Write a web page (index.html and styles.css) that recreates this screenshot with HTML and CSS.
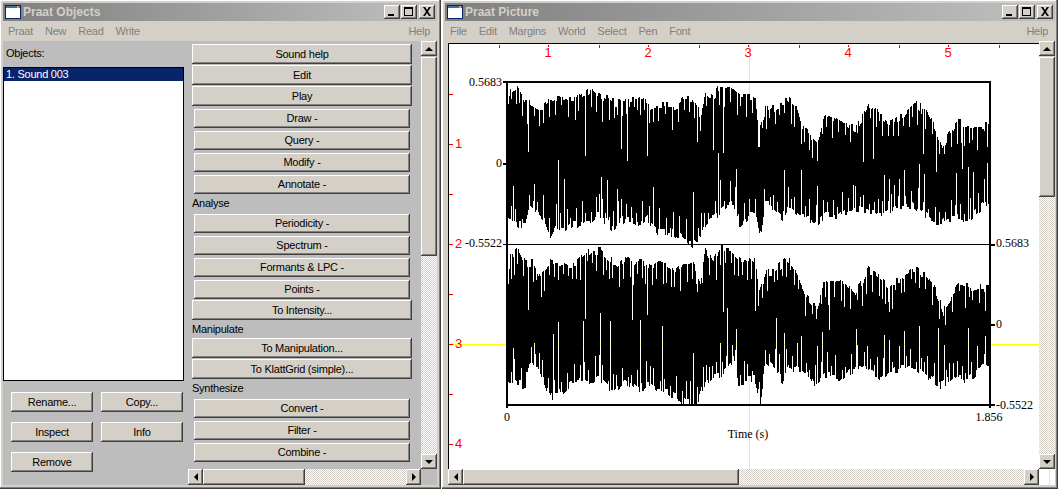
FILE: index.html
```html
<!DOCTYPE html>
<html lang="en">
<head>
<meta charset="utf-8">
<title>Praat</title>
<link rel="stylesheet" href="styles.css">
</head>
<body>
<section class="window window-objects">
  <header class="titlebar">
    <svg class="title-icon" width="16" height="14" viewBox="0 0 16 14"><rect x="0.5" y="0.5" width="15" height="13" fill="#fff" stroke="#0a246a"/><rect x="1" y="1" width="14" height="2" fill="#3a6ea5"/><rect x="12" y="1" width="2" height="2" fill="#f0a030"/></svg>
    <h1 class="title">Praat Objects</h1>
    <div class="controls">
      <button class="ctl"><svg width="12" height="10" viewBox="0 0 12 10"><rect x="2" y="7" width="6" height="2"/></svg></button>
      <button class="ctl"><svg width="12" height="10" viewBox="0 0 12 10"><path d="M1 0h9v9H1zM2 2v6h7V2z" fill-rule="evenodd"/></svg></button>
      <button class="ctl ctl-close"><svg width="12" height="10" viewBox="0 0 12 10"><path d="M2 0h2l2 3 2-3h2L7 4.500 10 9H8L6 6 4 9H2L5 4.500z"/></svg></button>
    </div>
  </header>
  <nav class="menubar">
    <span>Praat</span><span>New</span><span>Read</span><span>Write</span><span class="help">Help</span>
  </nav>
  <div class="objects-main">
    <div class="objects-left">
      <div class="objects-label">Objects:</div>
      <ul class="listbox"><li class="selected">1. Sound 003</li></ul>
      <div class="fixed-actions">
        <button class="btn">Rename...</button>
        <button class="btn">Copy...</button>
        <button class="btn">Inspect</button>
        <button class="btn">Info</button>
        <button class="btn">Remove</button>
      </div>
    </div>
    <div class="objects-right">
      <div class="pane">
        <div class="group group-wide">
          <button class="btn">Sound help</button>
          <button class="btn">Edit</button>
          <button class="btn">Play</button>
        </div>
        <div class="group group-narrow group-first">
          <button class="btn">Draw -</button>
          <button class="btn">Query -</button>
          <button class="btn">Modify -</button>
          <button class="btn">Annotate -</button>
        </div>
        <div class="section-label">Analyse</div>
        <div class="group group-narrow">
          <button class="btn">Periodicity -</button>
          <button class="btn">Spectrum -</button>
          <button class="btn">Formants &amp; LPC -</button>
          <button class="btn">Points -</button>
        </div>
        <div class="group group-wide group-after">
          <button class="btn">To Intensity...</button>
        </div>
        <div class="section-label section-short">Manipulate</div>
        <div class="group group-wide">
          <button class="btn">To Manipulation...</button>
          <button class="btn">To KlattGrid (simple)...</button>
        </div>
        <div class="section-label">Synthesize</div>
        <div class="group group-narrow">
          <button class="btn">Convert -</button>
          <button class="btn">Filter -</button>
          <button class="btn">Combine -</button>
        </div>
      </div>
      <div class="vscroll vscroll-objects">
        <span class="sb-btn"><i class="arrow up"></i></span>
        <span class="sb-thumb thumb-objects"></span>
        <span class="sb-track"></span>
        <span class="sb-btn"><i class="arrow down"></i></span>
      </div>
      <div class="hscroll">
        <span class="sb-btn"><i class="arrow left"></i></span>
        <span class="sb-thumb thumb-h-objects"></span>
        <span class="sb-track"></span>
        <span class="sb-btn"><i class="arrow right"></i></span>
      </div>
    </div>
  </div>
</section>

<section class="window window-picture">
  <header class="titlebar">
    <svg class="title-icon" width="16" height="14" viewBox="0 0 16 14"><rect x="0.5" y="0.5" width="15" height="13" fill="#fff" stroke="#0a246a"/><rect x="1" y="1" width="14" height="2" fill="#3a6ea5"/><rect x="12" y="1" width="2" height="2" fill="#f0a030"/></svg>
    <h1 class="title">Praat Picture</h1>
    <div class="controls">
      <button class="ctl"><svg width="12" height="10" viewBox="0 0 12 10"><rect x="2" y="7" width="6" height="2"/></svg></button>
      <button class="ctl"><svg width="12" height="10" viewBox="0 0 12 10"><path d="M1 0h9v9H1zM2 2v6h7V2z" fill-rule="evenodd"/></svg></button>
      <button class="ctl ctl-close"><svg width="12" height="10" viewBox="0 0 12 10"><path d="M2 0h2l2 3 2-3h2L7 4.500 10 9H8L6 6 4 9H2L5 4.500z"/></svg></button>
    </div>
  </header>
  <nav class="menubar">
    <span>File</span><span>Edit</span><span>Margins</span><span>World</span><span>Select</span><span>Pen</span><span>Font</span><span class="help">Help</span>
  </nav>
  <div class="picture-main">
    <svg class="canvas" width="591" height="426" viewBox="448 43 591 426">
      <rect class="paper" x="448" y="43" width="591" height="426"/>
      <g class="crisp">
        <path class="frame-thin" d="M448 43.500H1039M448.500 43V469"/>
        <path class="selection" d="M449 344.500H1039M749.500 44V469"/>
        <path class="ruler-line" d="M499.500 45V48M548.500 45V47M599.500 45V48M648.500 45V47M699.500 45V48M748.500 45V47M799.500 45V48M848.500 45V47M899.500 45V48M948.500 45V47M999.500 45V48"/>
        <path class="ruler-line" d="M449 94.500H453M449 144.500H453M449 194.500H453M449 244.500H453M449 294.500H453M449 344.500H453M449 394.500H453M449 444.500H453"/>
        <path id="wave" class="wave"/>
        <path class="frame" d="M503 82H991M507 81V408M990 81V408M506 405H995M990 244.500H995M990 324.500H995M503 163.500H507"/>
        <path class="frame-thin" d="M503 244.500H990"/>
      </g>
      <text class="ruler-text" x="548" y="57" text-anchor="middle">1</text>
      <text class="ruler-text" x="648" y="57" text-anchor="middle">2</text>
      <text class="ruler-text" x="748" y="57" text-anchor="middle">3</text>
      <text class="ruler-text" x="848" y="57" text-anchor="middle">4</text>
      <text class="ruler-text" x="948" y="57" text-anchor="middle">5</text>
      <text class="ruler-text" x="455" y="148">1</text>
      <text class="ruler-text" x="455" y="248">2</text>
      <text class="ruler-text" x="455" y="348">3</text>
      <text class="ruler-text" x="455" y="448">4</text>
      <text class="plot-text" x="502" y="86" text-anchor="end">0.5683</text>
      <text class="plot-text" x="502" y="167" text-anchor="end">0</text>
      <text class="plot-text" x="502" y="247" text-anchor="end">-0.5522</text>
      <text class="plot-text" x="996" y="247">0.5683</text>
      <text class="plot-text" x="996" y="328">0</text>
      <text class="plot-text" x="996" y="409">-0.5522</text>
      <text class="plot-text" x="507" y="421" text-anchor="middle">0</text>
      <text class="plot-text" x="989" y="421" text-anchor="middle">1.856</text>
      <text class="plot-text" x="748" y="438" text-anchor="middle">Time (s)</text>
    </svg>
    <div class="vscroll">
      <span class="sb-btn"><i class="arrow up"></i></span>
      <span class="sb-thumb thumb-picture"></span>
      <span class="sb-track"></span>
      <span class="sb-btn"><i class="arrow down"></i></span>
    </div>
    <div class="hscroll hscroll-picture">
      <span class="sb-btn"><i class="arrow left"></i></span>
      <span class="sb-thumb thumb-h-picture"></span>
      <span class="sb-track"></span>
      <span class="sb-btn"><i class="arrow right"></i></span>
    </div>
    <div class="corner"><i class="corner-line"></i></div>
  </div>
</section>
<script src="wave.js"></script>
</body>
</html>
```
FILE: styles.css
```css
* { box-sizing: border-box; }
html, body { margin: 0; padding: 0; }
body {
  width: 1060px;
  height: 489px;
  overflow: hidden;
  display: flex;
  background: #fff;
  font: 11px "Liberation Sans", Arial, sans-serif;
  letter-spacing: -0.25px;
  color: #000;
}
button { font: inherit; letter-spacing: inherit; color: inherit; padding: 0; margin: 0; }

.window {
  height: 489px;
  display: flex;
  flex-direction: column;
  background: #d4d0c8;
  box-shadow: inset -1px -1px #404040, inset -2px -2px #808080, inset 1px 1px #fff;
}
.window-objects { width: 441px; padding: 3px 4px 4px 3px; }
.window-picture { width: 616px; margin-left: 1px; padding: 3px 3px 4px 3px; }

.titlebar {
  height: 18px;
  flex: none;
  display: flex;
  align-items: center;
  padding: 0 2px;
  background: linear-gradient(90deg, #808080, #c0c0c0);
}
.title-icon { flex: none; margin-right: 2px; }
.title {
  margin: 0;
  font-size: 12px;
  font-weight: bold;
  letter-spacing: 0;
  color: #d4d0c8;
}
.controls { margin-left: auto; display: flex; gap: 1px; }
.ctl {
  width: 16px;
  height: 14px;
  display: flex;
  align-items: center;
  justify-content: center;
  border: 0;
  background: #d4d0c8;
  box-shadow: inset -1px -1px #404040, inset 1px 1px #fff, inset -2px -2px #808080;
}
.ctl-close { margin-left: 1px; }
.ctl svg { display: block; }

.menubar {
  height: 20px;
  flex: none;
  display: flex;
  align-items: center;
  gap: 12px;
  padding: 0 7px 0 5px;
  color: #808080;
}
.help { margin-left: auto; }

/* Objects window */
.objects-main {
  flex: 1;
  min-height: 0;
  display: flex;
  background: #bdbdbd;
}
.objects-left { width: 185px; flex: none; display: flex; flex-direction: column; }
.objects-label { height: 26px; padding: 6px 0 0 3px; line-height: 13px; }
.listbox {
  width: 181px;
  height: 314px;
  margin: 0;
  padding: 0;
  list-style: none;
  background: #fff;
  border: 1px solid #000;
}
.selected {
  height: 13px;
  line-height: 13px;
  padding-left: 2px;
  background: #0a246a;
  color: #fff;
}
.fixed-actions {
  display: grid;
  grid-template-columns: 82px 82px;
  grid-auto-rows: 20px;
  gap: 10px 8px;
  margin: 11px 0 0 8px;
}
.btn {
  display: block;
  width: 100%;
  border: 0;
  background: #d4d0c8;
  box-shadow: inset -1px -1px #404040, inset 1px 1px #fff, inset -2px -2px #808080;
  text-align: center;
}

.objects-right {
  flex: 1;
  display: grid;
  grid-template-columns: 233px 16px;
  grid-template-rows: 428px 16px;
}
.pane { padding: 3px 0 0 4px; overflow: hidden; width: 233px; }
.group { display: flex; flex-direction: column; }
.group-wide { width: 220px; gap: 1px; }
.group-wide .btn { height: 20px; }
.group-narrow { width: 216px; margin-left: 2px; gap: 3px; }
.group-narrow .btn { height: 19px; padding-bottom: 2px; }
.group-first { margin-top: 3px; }
.group-after { margin-top: 1px; }
.section-label { height: 20px; line-height: 18px; padding-top: 0; }
.section-short { height: 18px; line-height: 18px; }

/* Scrollbars */
.vscroll { display: flex; flex-direction: column; height: 428px; width: 16px; }
.hscroll { display: flex; height: 16px; width: 233px; grid-column: 1; }
.sb-btn {
  flex: none;
  display: flex;
  align-items: center;
  justify-content: center;
  width: 16px;
  height: 15px;
  background: #d4d0c8;
  box-shadow: inset -1px -1px #404040, inset 1px 1px #fff, inset -2px -2px #808080;
}
.hscroll .sb-btn { width: 15px; height: 16px; }
.sb-thumb {
  flex: none;
  background: #d4d0c8;
  box-shadow: inset -1px -1px #404040, inset 1px 1px #fff, inset -2px -2px #808080;
}
.sb-track {
  flex: 1;
  background: repeating-conic-gradient(#fff 0 25%, #d4d0c8 0 50%) 0 0 / 2px 2px;
}
.thumb-objects { height: 199px; margin-top: 1px; }
.thumb-picture { height: 140px; margin-top: 1px; }
.thumb-h-objects { width: 102px; }
.thumb-h-picture { width: 276px; }
.arrow { display: block; width: 0; height: 0; border: 0 solid transparent; }
.arrow.up { border-width: 0 4px 4px; border-bottom-color: #000; }
.arrow.down { border-width: 4px 4px 0; border-top-color: #000; }
.arrow.left { border-width: 4px 4px 4px 0; border-right-color: #000; }
.arrow.right { border-width: 4px 0 4px 4px; border-left-color: #000; }

/* Picture window */
.picture-main {
  flex: 1;
  min-height: 0;
  display: grid;
  grid-template-columns: 3px 591px 16px;
  grid-template-rows: 2px 426px 16px;
}
.canvas { grid-column: 2; grid-row: 2; display: block; }
.picture-main .vscroll { grid-column: 3; grid-row: 1 / span 2; }
.hscroll-picture { grid-column: 2; grid-row: 3; width: 591px; }
.corner { grid-column: 3; grid-row: 3; background: #fff; padding-left: 10px; }
.corner-line { display: block; width: 1px; height: 100%; background: #ffff00; }

.paper { fill: #fff; }
.crisp { shape-rendering: crispEdges; fill: none; }
.selection { stroke: #ffff00; stroke-width: 1; }
.ruler-line { stroke: #ff0000; stroke-width: 1; }
.wave { stroke: #000; stroke-width: 1; }
.frame { stroke: #000; stroke-width: 2; }
.frame-thin { stroke: #000; stroke-width: 1; }
.ruler-text { font: 13px "Liberation Sans", Arial, sans-serif; letter-spacing: 0; fill: #ff0000; }
.plot-text { font: 12px "Liberation Serif", "Times New Roman", serif; letter-spacing: 0; fill: #000; }
```
FILE: wave.js
```js
(function () {
  // Envelope samples of the recording: [x, y] pairs in canvas coordinates.
  var ch1Top = [[508,110],[510,95],[517,88],[525,102],[533,105],[542,110],[550,105],[558,102],[567,103],[575,103],[583,98],[592,92],[600,97],[608,102],[617,107],[625,102],[633,103],[642,102],[650,108],[658,108],[667,108],[675,110],[683,102],[692,102],[700,117],[705,95],[713,100],[720,88],[730,88],[740,98],[749,98],[755,100],[758,133],[765,113],[775,110],[787,103],[795,108],[800,127],[808,137],[817,148],[823,123],[832,120],[845,127],[855,132],[868,110],[882,118],[888,127],[902,118],[915,108],[925,112],[935,132],[942,148],[948,138],[958,125],[978,128],[989,128]];
  var ch1Bot = [[508,217],[517,222],[525,223],[530,203],[537,208],[543,215],[550,235],[555,225],[563,225],[575,222],[587,218],[600,213],[613,227],[625,215],[637,222],[647,215],[657,228],[667,228],[680,235],[697,243],[703,222],[713,215],[720,208],[733,200],[738,222],[749,212],[755,212],[760,240],[765,202],[773,205],[782,215],[788,203],[798,212],[808,215],[813,223],[825,213],[838,213],[852,205],[865,207],[882,213],[895,203],[912,202],[928,215],[942,220],[952,215],[967,217],[978,207],[989,198]];
  var ch2Top = [[508,290],[510,260],[517,252],[525,267],[533,265],[540,278],[550,263],[558,263],[567,268],[575,268],[583,260],[592,253],[600,253],[608,263],[617,265],[625,260],[633,265],[642,263],[650,272],[658,267],[667,267],[675,273],[683,265],[692,263],[700,283],[705,253],[713,265],[720,252],[730,252],[740,262],[749,262],[755,265],[758,297],[765,277],[775,273],[787,262],[795,273],[800,288],[808,300],[817,308],[823,288],[832,282],[845,283],[855,295],[868,273],[882,283],[888,288],[902,280],[915,272],[925,277],[935,293],[942,312],[948,303],[958,287],[978,290],[989,290]];
  var ch2Bot = [[508,378],[517,382],[525,382],[530,362],[537,363],[543,377],[550,397],[555,387],[563,387],[575,380],[587,378],[600,375],[613,388],[625,377],[637,387],[647,383],[657,387],[667,390],[680,397],[697,402],[703,383],[713,373],[720,372],[733,357],[738,380],[749,377],[755,377],[760,400],[765,360],[773,367],[782,377],[788,363],[798,368],[808,372],[813,383],[825,373],[838,375],[852,367],[865,368],[882,375],[895,367],[912,362],[928,375],[942,383],[952,373],[967,378],[978,368],[989,363]];

  // Deep gaps in the trace: [x, y reached by the gap].
  var ch1TopGaps = [[528,152],[585,156],[621,149],[627,161],[647,156],[697,142],[713,150],[723,153],[758,147],[863,162],[873,159],[923,154],[936,172],[962,169]];
  var ch1BotGaps = [[513,186],[534,184],[558,160],[564,179],[601,177],[607,180],[617,189],[653,187],[693,192],[718,153],[720,180],[730,181],[736,169],[784,170],[801,170],[817,186],[853,185],[884,175],[889,179],[899,179],[904,170],[919,164],[924,174],[956,173],[968,167],[973,172],[987,163]];
  var ch2TopGaps = [[528,310],[585,319],[632,320],[647,315],[697,292],[723,312],[755,311],[829,330],[889,312],[943,316]];
  var ch2BotGaps = [[513,348],[534,343],[553,334],[558,322],[583,321],[600,313],[610,321],[640,320],[662,326],[693,353],[720,343],[727,308],[736,329],[776,318],[784,333],[801,336],[817,346],[822,332],[856,329],[884,335],[889,340],[904,331],[919,326],[938,328],[944,345],[968,328],[985,336]];

  var seed = 20417;
  function rnd() {
    seed = (seed * 1664525 + 1013904223) >>> 0;
    return ((seed >>> 8) & 65535) / 65536;
  }
  function envelope(pts, x) {
    for (var i = 1; i < pts.length; i++) {
      if (x <= pts[i][0]) {
        var a = pts[i - 1], b = pts[i];
        return a[1] + (b[1] - a[1]) * (x - a[0]) / (b[0] - a[0]);
      }
    }
    return pts[pts.length - 1][1];
  }
  function edge(pts, gaps, dir) {
    var out = {}, x = 508, next = 508, cur = 0, spike = 511;
    var map = {};
    gaps.forEach(function (g) { map[g[0]] = g[1]; });
    for (; x < 989; x++) {
      if (x >= next) {
        cur = rnd() * 9 - 7;
        next = x + 2 + Math.floor(rnd() * 2);
      }
      var y = envelope(pts, x) + dir * cur;
      if (x >= spike) {
        y += dir * (8 + rnd() * 16);
        spike = x + 3 + Math.floor(rnd() * 5);
      }
      if (map[x] !== undefined) y = map[x];
      out[x] = Math.round(y);
    }
    return out;
  }
  function channel(top, bot, topGaps, botGaps) {
    var t = edge(top, topGaps, 1), b = edge(bot, botGaps, -1), d = "";
    for (var x = 508; x < 989; x++) {
      d += "M" + (x + 0.5) + " " + t[x] + "V" + b[x];
    }
    return d;
  }
  document.getElementById("wave").setAttribute("d",
    channel(ch1Top, ch1Bot, ch1TopGaps, ch1BotGaps) +
    channel(ch2Top, ch2Bot, ch2TopGaps, ch2BotGaps));
})();
```
